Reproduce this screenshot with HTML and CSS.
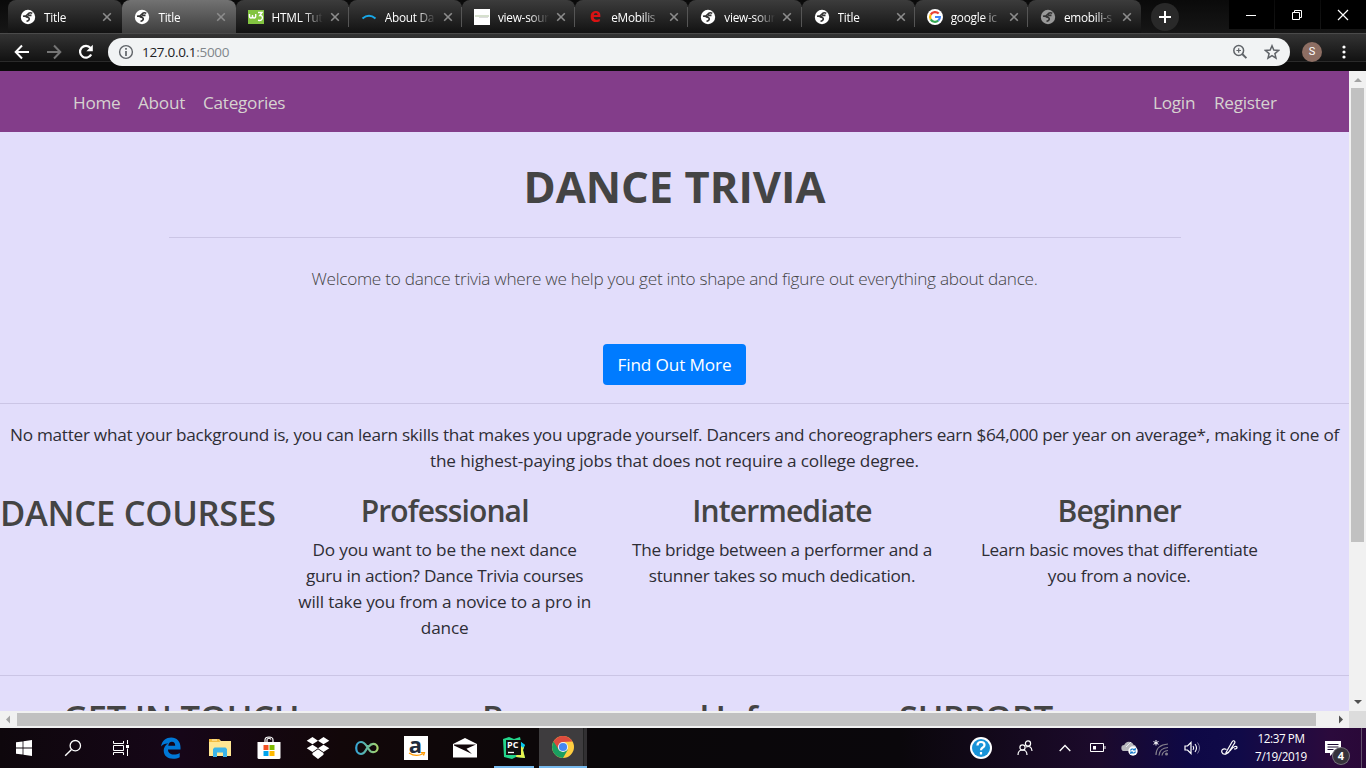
FILE: index.html
```html
<!DOCTYPE html>
<html lang="en">
<head>
<meta charset="utf-8">
<title>Title</title>
<link rel="stylesheet" href="styles.css">
</head>
<body>
<svg class="defs" width="0" height="0">
  <symbol id="globe" viewBox="0 0 16 16"><circle cx="8" cy="8" r="7.200" fill="currentColor"/><path d="M12.300 4.200Q10 3.200 8.600 4.300 7.200 5.600 9 6.400H11.500M3 7.300Q6 6.800 7 8.300 9.300 8.300 9.300 10 9 12 6.500 12.300M8.300 4.800L6.300 6.600 8.500 8.500" fill="none" stroke="#333" stroke-width="1.600" stroke-linejoin="round"/></symbol>
  <symbol id="close" viewBox="0 0 10 10"><path d="M1.200 1.200l7.600 7.600M8.800 1.200L1.200 8.800" stroke="#8c8c8c" stroke-width="1.600" fill="none"/></symbol>
</svg>

<header class="tabstrip">
  <div class="tabs">
    <div class="tab before"><svg class="fav"><use href="#globe"/></svg><span class="label">Title</span><svg class="x"><use href="#close"/></svg></div>
    <div class="tab active"><svg class="fav"><use href="#globe"/></svg><span class="label">Title</span><svg class="x"><use href="#close"/></svg></div>
    <div class="tab"><svg class="fav" viewBox="0 0 16 16"><rect width="16" height="14" y="1" fill="#83c441"/><path d="M1.500 5v2q0 2 1.500 2t1.500-2V6v1q0 2 1.600 2t1.600-2V5M10 3.500h4L11.800 6.500q2.800-.2 2.600 2.500-.4 3-4.400 2.300" fill="none" stroke="#fff" stroke-width="1.400"/></svg><span class="label">HTML Tut</span><svg class="x"><use href="#close"/></svg></div>
    <div class="tab"><svg class="fav" viewBox="0 0 16 16"><path d="M1.500 9.500Q8 4 14.500 9.500" fill="none" stroke="#18a8e8" stroke-width="2"/></svg><span class="label">About Da</span><svg class="x"><use href="#close"/></svg></div>
    <div class="tab"><svg class="fav" viewBox="0 0 16 16"><rect width="16" height="16" fill="#fff"/><path d="M1 7h14" stroke="#c9d6bd" stroke-width="1.500"/><path d="M5 8.500h9" stroke="#ddd"/></svg><span class="label">view-sour</span><svg class="x"><use href="#close"/></svg></div>
    <div class="tab"><span class="fav em">e</span><span class="label">eMobilis</span><svg class="x"><use href="#close"/></svg></div>
    <div class="tab"><svg class="fav"><use href="#globe"/></svg><span class="label">view-sour</span><svg class="x"><use href="#close"/></svg></div>
    <div class="tab"><svg class="fav"><use href="#globe"/></svg><span class="label">Title</span><svg class="x"><use href="#close"/></svg></div>
    <div class="tab"><svg class="fav" viewBox="0 0 16 16"><circle cx="8" cy="8" r="8" fill="#fff"/><g fill="none" stroke-width="2.200"><path d="M11.700 4.600A5 5 0 0 0 3.700 5.600" stroke="#ea4335"/><path d="M3.700 5.600a5 5 0 0 0 0 4.800" stroke="#fbbc05"/><path d="M3.700 10.400a5 5 0 0 0 7.500 1.300" stroke="#34a853"/><path d="M11.200 11.700A5 5 0 0 0 12.900 8H8" stroke="#4285f4"/></g></svg><span class="label">google ic</span><svg class="x"><use href="#close"/></svg></div>
    <div class="tab last"><svg class="fav dim"><use href="#globe"/></svg><span class="label">emobili-s</span><svg class="x"><use href="#close"/></svg></div>
  </div>
  <div class="newtab"><svg width="12" height="12" viewBox="0 0 12 12"><path d="M6 0v12M0 6h12" stroke="#fff" stroke-width="2"/></svg></div>
  <div class="winctl">
    <span><svg width="12" height="12" viewBox="0 0 12 12"><path d="M1 6.500h10" stroke="#fff"/></svg></span>
    <span><svg width="12" height="12" viewBox="0 0 12 12"><path d="M1.500 3.500h7v7h-7zM3.500 3.500v-2h7v7h-2" fill="none" stroke="#fff"/></svg></span>
    <span><svg width="12" height="12" viewBox="0 0 12 12"><path d="M1 1l10 10M11 1L1 11" stroke="#fff" stroke-width="1.200"/></svg></span>
  </div>
</header>

<div class="toolbar">
  <svg class="tb" viewBox="0 0 16 16"><path d="M15 8H2.500M8 1.500L1.700 8 8 14.500" fill="none" stroke="#fff" stroke-width="2"/></svg>
  <svg class="tb" viewBox="0 0 16 16"><path d="M1 8h12.500M8 1.500L14.300 8 8 14.500" fill="none" stroke="#757575" stroke-width="2"/></svg>
  <svg class="tb" viewBox="0 0 16 16"><path d="M13.200 10.500A5.900 5.900 0 1 1 12.500 4" fill="none" stroke="#fff" stroke-width="2.200"/><path d="M14.800.8v6.400H8.400z" fill="#fff"/></svg>
  <div class="omnibox">
    <svg width="16" height="16" viewBox="0 0 16 16"><circle cx="8" cy="8" r="6.400" fill="none" stroke="#5f6368" stroke-width="1.400"/><path d="M8 7v5M8 4v1.700" stroke="#5f6368" stroke-width="1.700"/></svg>
    <span class="url">127.0.0.1<em>:5000</em></span>
    <svg class="mag" width="16" height="16" viewBox="0 0 16 16"><circle cx="6.700" cy="6.500" r="4.900" fill="none" stroke="#5f6368" stroke-width="1.500"/><path d="M10.200 10l4.200 4.200" stroke="#5f6368" stroke-width="1.900"/><path d="M6.700 4.200v4.600M4.400 6.500H9" stroke="#5f6368" stroke-width="1.200"/></svg>
    <svg width="16" height="16" viewBox="0 0 16 16"><path d="M8 1.800l1.800 4.300 4.700.4-3.600 3.100 1.100 4.600L8 11.700l-4 2.500 1.100-4.600L1.500 6.500l4.700-.4z" fill="none" stroke="#5f6368" stroke-width="1.500"/></svg>
  </div>
  <span class="avatar">S</span>
  <svg class="dots" width="4" height="16" viewBox="0 0 4 16"><g fill="#fff"><circle cx="2" cy="3" r="1.600"/><circle cx="2" cy="8" r="1.600"/><circle cx="2" cy="13" r="1.600"/></g></svg>
</div>

<div class="view">
  <main class="page">
    <nav class="navbar">
      <a class="n1">Home</a><a class="n2">About</a><a class="n3">Categories</a>
      <a class="n4">Login</a><a class="n5">Register</a>
    </nav>
    <section class="hero">
      <h1>DANCE TRIVIA</h1>
      <hr>
      <p class="lead">Welcome to dance trivia where we help you get into shape and figure out everything about dance.</p>
      <a class="btn">Find Out More</a>
    </section>
    <section class="pitch">No matter what your background is, you can learn skills that makes you upgrade yourself. Dancers and choreographers earn $64,000 per year on average*, making it one of<br><span class="loose">the highest-paying jobs that does not require a college degree.</span></section>
    <section class="courses">
      <h2>DANCE COURSES</h2>
      <div class="course"><h3>Professional</h3><p><span class="loose">Do you want to be the next dance</span><br>guru in action? Dance Trivia courses<br><span class="loose">will take you from a novice to a pro in</span><br><span class="loose">dance</span></p></div>
      <div class="course"><h3>Intermediate</h3><p>The bridge between a performer and a<br>stunner takes so much dedication.</p></div>
      <div class="course"><h3>Beginner</h3><p><span class="tight">Learn basic moves that differentiate</span><br>you from a novice.</p></div>
    </section>
    <footer class="foot">
      <h2 class="f1">GET IN TOUCH</h2><h2 class="f2">Resources and Info</h2><h2 class="f3">SUPPORT</h2>
    </footer>
  </main>
  <div class="vbar"><svg width="17" height="17" viewBox="0 0 17 17"><path d="M5 11l4-4 4 4z" fill="#a3a3a3"/></svg><span></span><svg width="17" height="17" viewBox="0 0 17 17"><path d="M5 6l4 4 4-4z" fill="#505050"/></svg></div>
</div>
<div class="hbar"><svg width="17" height="17" viewBox="0 0 17 17"><path d="M10 4.500v8l-4-4z" fill="#a3a3a3"/></svg><span></span><svg width="17" height="17" viewBox="0 0 17 17"><path d="M7 4.500v8l4-4z" fill="#505050"/></svg><b></b></div>

<footer class="taskbar">
  <div class="apps">
    <span><svg width="16" height="16" viewBox="0 0 16 16"><path d="M0 2.300L6.600 1.400v6.200H0zM7.400 1.300L16 0v7.600H7.400zM0 8.400h6.600v6.200L0 13.700zM7.400 8.400H16V16l-8.600-1.300z" fill="#fff"/></svg></span>
    <span><svg width="18" height="18" viewBox="0 0 18 18"><circle cx="11.300" cy="6.700" r="5.200" fill="none" stroke="#fff" stroke-width="1.300"/><path d="M7.500 10.500L1.200 16.800" stroke="#fff" stroke-width="1.400"/></svg></span>
    <span><svg width="17" height="16" viewBox="0 0 17 16"><path d="M.5 1v2.500h10V1M.5 15v-2.500h10V15M.5 5.500h10v5H.5zM14.500 0v4M14.500 8.500V16" fill="none" stroke="#fff"/><rect x="13" y="5" width="3" height="3" fill="#fff"/></svg></span>
    <span><svg width="22" height="22" viewBox="0 0 22 22"><path d="M1 9.500C2 3.800 6.200.6 11.200.6c5.600 0 9.300 4.200 9.300 9.600v2.300H8c0 3.400 2.500 5 5.800 5 2.200 0 4.400-.7 5.900-1.600v4.300c-2 1-4.200 1.500-6.700 1.500-5.400 0-9.300-3-9.300-8.200 0-3.100 1.600-5.700 4.400-7.100C5 6.300 2.700 7.300 1 9.500zM8.300 8.700h6.900c0-2.400-1.200-3.900-3.300-3.900-2 0-3.300 1.600-3.600 3.900z" fill="#0078d7"/></svg></span>
    <span><svg width="22" height="20" viewBox="0 0 22 20"><path d="M0 1h10l2 2h10v15H0z" fill="#ffe793"/><path d="M0 1h10l1 3H0z" fill="#f3bd42"/><path d="M3 2h5" stroke="#fff3c4"/><path d="M4 19v-8l1.500-1.500h11L18 11v8h-4v-4.500H8V19z" fill="#3bb4e8"/></svg></span>
    <span><svg width="24" height="24" viewBox="0 0 24 24"><path d="M8 7V4q0-3 4-3t4 3v3M10 7V3.500Q12 1 14 3.500" fill="none" stroke="#fff" stroke-width="1.200"/><path d="M.5 6h23v15.500q0 1.500-1.500 1.500H2q-1.500 0-1.500-1.500z" fill="#fff"/><path d="M6.500 9h5v5h-5z" fill="#f25022"/><path d="M12.500 9h5v5h-5z" fill="#7fba00"/><path d="M6.500 15h5v5h-5z" fill="#00a4ef"/><path d="M12.500 15h5v5h-5z" fill="#ffb900"/></svg></span>
    <span><svg width="24" height="24" viewBox="0 0 24 24"><path d="M6.500 1L12 4.700 6.500 8.300.7 4.700zM17.500 1l5.800 3.700-5.800 3.600L12 4.700zM6.500 8.700l5.500 3.600-5.500 3.700-5.800-3.700zM17.500 8.700l5.800 3.600-5.800 3.700-5.500-3.700zM12 13.200l5.500 3.700v1.800L12 23l-5.500-4.300v-1.800z" fill="#fff"/></svg></span>
    <span><svg width="24" height="16" viewBox="0 0 24 16"><defs><linearGradient id="inf"><stop stop-color="#36a5d4"/><stop offset=".5" stop-color="#64b8a0"/><stop offset="1" stop-color="#a6d36b"/></linearGradient></defs><path d="M13.500 5.500L11 10c-1.500 2.700-3 4-5 4-2.700 0-4.800-2.500-4.800-6S3.300 2 6 2s4.200 1.800 6 4.500l2 3c1 1.600 2.200 2.700 4.200 2.700 2.400 0 4.400-1.800 4.400-4.200S20.600 3.900 18.200 3.900c-2 0-3.200 1-4.700 3" fill="none" stroke="url(#inf)" stroke-width="2.200"/></svg></span>
    <span><span class="amz">a<svg width="18" height="5" viewBox="0 0 18 5"><path d="M1 1q7 4.500 14 .7M13 .7l3.500-.2-1 3" fill="none" stroke="#f90" stroke-width="1.300"/></svg></span></span>
    <span><svg width="24" height="20" viewBox="0 0 24 20"><path d="M0 6L12 0l12 6v13.500H0z" fill="#fff"/><path d="M1 6.500h22l-9.500 4.300 5.500 5.200L1 7.500z" fill="#12070a"/></svg></span>
    <span class="run"><svg width="24" height="24" viewBox="0 0 24 24"><path d="M1 3l6-2 5 2 6-2 1 5 4 3-2 5 2 8-9-1-4 2-8-2z" fill="#24d58b"/><path d="M19 8l3 3-1 3 2 8-9-1 1-4z" fill="#e9f14f"/><path d="M19 6l4 3-2 3-3-3z" fill="#07c3f2"/><rect x="4" y="4" width="15" height="15" fill="#111"/><path d="M6 16.500h6" stroke="#fff" stroke-width="1.300"/><text x="5" y="12" class="pc">PC</text></svg></span>
    <span class="cur"><svg width="22" height="22" viewBox="0 0 22 22"><circle cx="11" cy="11" r="11" fill="#ffcd40"/><path d="M1.500 5.500A11 11 0 0 0 11 22l4.800-8.300L11 11z" fill="#1a9e60"/><path d="M1.500 5.500A11 11 0 0 1 20.500 5.500L11 6l-4 8z" fill="#dd4b3e"/><circle cx="11" cy="11" r="5.100" fill="#f1f1f1"/><circle cx="11" cy="11" r="4.100" fill="#4587f3"/></svg></span>
  </div>
  <div class="tray">
    <span><svg width="24" height="24" viewBox="0 0 24 24"><circle cx="12" cy="12" r="11" fill="#fff"/><circle cx="12" cy="12" r="9" fill="#1793d8"/><path d="M8.500 9.500q0-3.500 3.500-3.500t3.500 3q0 1.500-1.700 2.500T12 14.300M12 16v2.400" fill="none" stroke="#fff" stroke-width="2.200"/></svg></span>
    <span><svg width="16" height="16" viewBox="0 0 16 16"><g fill="none" stroke="#fff" stroke-width="1.200"><circle cx="5.500" cy="7.500" r="2.600"/><path d="M1 15q0-5 4.500-5T10 15"/><circle cx="11" cy="3.500" r="2.600"/><path d="M9 7q5.500-2 6 4"/></g></svg></span>
    <span><svg width="12" height="8" viewBox="0 0 12 8"><path d="M.7 7L6 1.500 11.300 7" fill="none" stroke="#fff" stroke-width="1.300"/></svg></span>
    <span><svg width="16" height="10" viewBox="0 0 16 10"><path d="M.5.500h13v8H.5zM15 3v3" fill="none" stroke="#fff"/><path d="M3 3h3v3.500H3z" fill="#fff"/></svg></span>
    <span><svg width="17" height="15" viewBox="0 0 17 15"><path d="M3.500 10a3 3 0 0 1-.3-6 5 5 0 0 1 9.300-.3A3 3 0 0 1 15 8l-3 2z" fill="#b8b8bd"/><path d="M5 6l5-5" stroke="#e8e8ef"/><circle cx="12" cy="10" r="4.700" fill="#fff"/><path d="M9.500 9.500q1-2.500 4-1M14.500 10.500q-1 2.500-4 1M14.200 7v2h-2M9.800 13v-2h2" fill="none" stroke="#0b74c9" stroke-width="1.100"/></svg></span>
    <span><svg width="16" height="16" viewBox="0 0 16 16"><g fill="none" stroke="#85808d" stroke-width="1.200"><path d="M3 15Q3 5 15 4M6 15.500Q6.500 8 15 7.500M9 15.500q.5-4.500 6-5"/></g><circle cx="13.500" cy="14" r="1.500" fill="#85808d"/><path d="M3 0v5.500M.5 1.500l5 2.800M5.500 1.500l-5 2.800" stroke="#fff"/></svg></span>
    <span><svg width="17" height="14" viewBox="0 0 17 14"><path d="M1 5h2.500L7 1.500v11L3.500 9H1z" fill="none" stroke="#fff" stroke-width="1.200"/><path d="M9 5q1.500 2 0 4M11 3q3 4 0 8" fill="none" stroke="#fff" stroke-width="1.100"/><path d="M13.500 1.500q4 5.500 0 11" fill="none" stroke="#7c789d"/></svg></span>
    <span><svg width="17" height="16" viewBox="0 0 17 16"><path d="M5 12.500L11 2q1.500-2 2.500-.8T13 4L7.500 12.500 5 14zM5.500 9.500C2 8 0 10 1 12.500s4 2 6.500-.5M9 11q3-4 5-4.500t2 1-3 1.500" fill="none" stroke="#fff" stroke-width="1.200"/></svg></span>
    <div class="clock">12:37 PM<br>7/19/2019</div>
    <div class="note"><svg width="16" height="15" viewBox="0 0 16 15"><path d="M0 0h16v12H8l-3 3v-3H0z" fill="#fff"/><path d="M2.500 3.500h11M2.500 6h11M2.500 8.500h6" stroke="#1b0830"/></svg><b>4</b></div>
    <div class="edge"></div>
  </div>
</footer>
</body>
</html>
```
FILE: styles.css
```css
*{box-sizing:border-box}
body{margin:0;width:1366px;height:768px;overflow:hidden;font-family:"Open Sans","Noto Sans",sans-serif;background:#000}
em{font-style:normal}
.defs{display:block;position:absolute}
svg{display:block;flex:none}
h1,h2,h3,p,hr{margin:0}

/* browser tabs */
.tabstrip{height:33px;background:linear-gradient(#0a0a0a,#161616);display:flex;padding-left:8px}
.tabs{display:flex;width:1136px}
.tab{width:113.200px;flex:none;height:33px;display:flex;align-items:center;padding:1px 8px 0 12px;border-radius:8px 8px 0 0;background:linear-gradient(#3c3c3c,#121212)}
.tab::after{content:"";width:1px;height:20px;background:#555;margin:0 -8px 0 auto}
.tab.last::after,.tab.active::after,.tab.before::after{background:none}
.tab.before{width:114.400px}
.tab.active{background:linear-gradient(#727272,#3e3e3e)}
.fav{width:16px;height:16px;color:#fff;flex:none}
.fav.dim{color:#999}
.fav.em{color:#d91212;font:bold 19px/13px "Open Sans",sans-serif;text-align:center}
.label{width:51px;flex:none;margin-left:8px;overflow:hidden;white-space:nowrap;color:#fff;font-size:11.800px;letter-spacing:-.25px;line-height:16px;-webkit-mask-image:linear-gradient(90deg,#000 62%,transparent);mask-image:linear-gradient(90deg,#000 62%,transparent)}
.x{width:10px;height:10px;margin-left:7px}
.newtab{width:28px;height:28px;margin:3px 0 0 7px;border-radius:50%;background:#292929;display:flex;align-items:center;justify-content:center}
.winctl{margin-left:auto;display:flex;gap:1px;height:29px}
.winctl span{width:45px;background:#000;display:flex;align-items:center;justify-content:center;padding-right:2px}

/* address bar */
.toolbar{height:38px;background:linear-gradient(#4a4a4a 0 1px,#333 1px,#121212 28px,#2a2a2a 28px 29px,#0b0b0b 29px);display:flex;align-items:center;padding:0 20px 0 14px;gap:16px}
.tb{width:16px;height:16px}
.omnibox{width:1182px;height:28px;margin-left:-2px;border-radius:14px;background:#f1f3f4;display:flex;align-items:center;padding:0 10px;gap:16px;flex:none}
.url{margin:0 0 0 -8px;font-size:13.500px;letter-spacing:-.3px;color:#202124;white-space:nowrap}
.url em{color:#80868b}
.mag{margin-left:auto}
.avatar{width:20px;height:20px;margin-left:-4px;border-radius:50%;background:#8d6e63;color:#fff;font:11px/20px Roboto,sans-serif;text-align:center}
.dots{margin-left:auto}

/* page */
.view{display:flex;height:640px}
.page{width:1349px;height:640px;overflow:hidden;background:#e2ddfb;color:#2e2d35;font-size:17.200px;letter-spacing:-.275px;line-height:26px;text-align:center}
.loose{letter-spacing:-.17px}
.tight{letter-spacing:-.33px}
.navbar{height:61px;background:#833d8a;display:flex;align-items:center;padding:3px 73px 0;color:#d6d2d0;text-align:left}
.n1{width:65px}
.n2{width:65px}
.n4{margin-left:auto;width:61px}
.n5{width:62px}
.hero{height:271px;padding-top:30px}
h1{font-size:43.500px;letter-spacing:0;line-height:50px;font-weight:700;color:#444}
.hero hr{width:1012px;margin:25px auto 0}
hr{border:0;border-top:1px solid #cbc5e5}
.lead{margin-top:28px;font-weight:300;color:#444}
.btn{display:inline-block;margin-top:52px;width:143px;height:41px;border-radius:4px;background:#007bff;color:#fff;letter-spacing:-.13px;line-height:41px;white-space:nowrap}
.pitch{border-top:1px solid #cbc5e5;padding-top:18px;height:89px;white-space:nowrap}
.courses{display:flex;height:183px;white-space:nowrap}
h2,h3{font-weight:600;color:#444;white-space:nowrap}
.courses h2{width:276px;font-size:34.500px;letter-spacing:-.25px;line-height:42px;text-align:left}
.course{width:337.300px}
h3{font-size:30px;letter-spacing:-.88px;line-height:37px;margin-bottom:8px}
.foot{border-top:1px solid #cbc5e5;padding:21px 0 0 63px;display:flex;text-align:left}
.foot h2{font-size:34.500px;letter-spacing:-.25px;line-height:42px}
.f1{width:419px}
.foot .f2{width:417px;letter-spacing:-1.300px}

/* scrollbars */
.vbar{width:17px;background:#f1f1f1;display:flex;flex-direction:column}
.vbar span{width:13px;height:454px;margin:0 2px auto;background:#c1c1c1}
.hbar{height:17px;background:#f1f1f1;display:flex}
.hbar span{height:13px;width:1299px;margin:2px auto 2px 0;background:#c1c1c1}
.hbar b{width:17px;background:#dcdcdc}

/* taskbar */
.taskbar{height:40px;display:flex;background:linear-gradient(90deg,#0e070c 0,#160618 180px,#120709 340px,#0a0709 600px,#0a070b 900px,#1c0a2c 1100px,#0e0846 1190px,#100a48 1240px,#2b0a3c 1330px,#2a0838)}
.apps{display:flex;width:588px;margin-left:-1px}
.apps>span{width:49px;height:40px;display:flex;align-items:center;justify-content:center;flex:none}
.apps>.run{background:linear-gradient(#76b9ed,#76b9ed) 5px 38px/40px 2px no-repeat}
.apps>.cur{width:48px;margin-left:1px;background:linear-gradient(90deg,#3e3c3e 44px,#222 44px 45px,#323032 45px);border-bottom:2px solid #76b9ed}
.amz{width:24px;height:24px;background:#fff;color:#222b3a;font:bold 22px/17px "Open Sans",sans-serif;text-align:center}
.amz svg{margin:-1px auto 0 4px}
.pc{font:bold 9px "Open Sans",sans-serif;fill:#fff}
.tray{margin-left:auto;display:grid;grid-template-columns:40px 48px 32px 34px 28px 36px 26px 48px 56px 52px 5px;width:405px;align-items:center}
.tray>span{display:flex;justify-content:center}
.clock{color:#fff;font-size:11.700px;letter-spacing:-.4px;line-height:18px;text-align:center;padding-bottom:2px;white-space:nowrap}
.note{position:relative;padding-left:16px}
.note b{position:absolute;left:24px;top:7px;width:16px;height:16px;border-radius:50%;background:#35323a;box-shadow:0 0 0 1px #77737c;color:#fff;font:bold 11px/16px "Open Sans",sans-serif;text-align:center}
.edge{height:40px;border-left:1px solid #61506b}
```
